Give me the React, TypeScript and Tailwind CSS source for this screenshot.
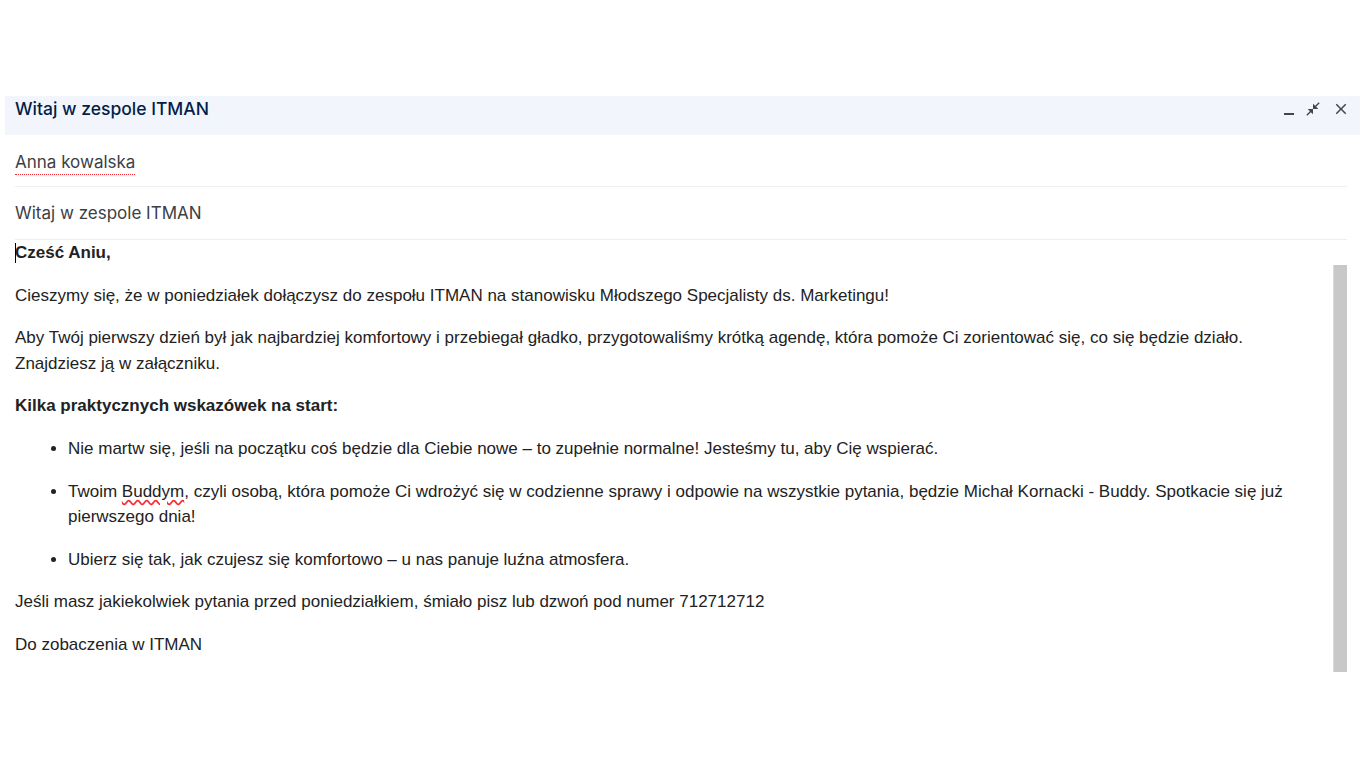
import React from 'react';

const inter = { fontFamily: 'Inter, Roboto, sans-serif' };
const arial = { fontFamily: '"Liberation Sans", Arial, sans-serif' };

const MinimizeIcon = () => (
  <svg width="12" height="14" viewBox="0 0 12 14" fill="#444746">
    <rect x="1" y="11" width="10" height="2" />
  </svg>
);

const CloseFullIcon = () => (
  <svg width="16" height="16" viewBox="0 0 24 24" fill="#444746">
    <path d="M22 3.41 16.71 8.7 20 12h-8V4l3.29 3.29L20.59 2 22 3.41zM3.41 22l5.29-5.29L12 20v-8H4l3.29 3.29L2 20.59 3.41 22z" />
  </svg>
);

const CloseIcon = () => (
  <svg width="18" height="18" viewBox="0 0 24 24" fill="#444746">
    <path d="M19 6.41 17.59 5 12 10.59 6.41 5 5 6.41 10.59 12 5 17.59 6.41 19 12 13.41 17.59 19 19 17.59 13.41 12z" />
  </svg>
);

const bullets = [
  <>Nie martw się, jeśli na początku coś będzie dla Ciebie nowe – to zupełnie normalne! Jesteśmy tu, aby Cię wspierać.</>,
  <>
    Twoim{' '}
    <span className="underline decoration-red-500 decoration-wavy underline-offset-[3px]">Buddym</span>, czyli osobą, która
    pomoże Ci wdrożyć się w codzienne sprawy i odpowie na wszystkie pytania, będzie Michał Kornacki - Buddy. Spotkacie się już
    pierwszego dnia!
  </>,
  <>Ubierz się tak, jak czujesz się komfortowo – u nas panuje luźna atmosfera.</>,
];

export default function App() {
  return (
    <div className="min-h-[768px] w-[1366px] bg-white pt-[96px]">
      {/* Nagłówek okna */}
      <div className="ml-[5px] flex h-[39px] w-[1355px] items-start justify-between bg-[#f2f6fc] pl-[10px] pr-[10px]">
        <span className="text-[17.5px] font-medium leading-[26px] text-[#041e49]" style={inter}>
          Witaj w zespole ITMAN
        </span>
        <div className="flex items-center pt-[4px]">
          <MinimizeIcon />
          <span className="ml-[10px]">
            <CloseFullIcon />
          </span>
          <span className="ml-[11px]">
            <CloseIcon />
          </span>
        </div>
      </div>

      <div className="ml-[15px] w-[1332px]">
        {/* Odbiorca */}
        <div className="flex h-[52px] items-center border-b border-[#eceff1] pt-[4px]" style={inter}>
          <span className="border-b border-dotted border-red-500 pb-[1px] text-[17px] leading-[22px] text-[#3c4043]">
            Anna kowalska
          </span>
        </div>
        {/* Temat */}
        <div className="flex h-[53px] items-center border-b border-[#eceff1] pt-[1px]" style={inter}>
          <span className="text-[17px] text-[#3c4043]">Witaj w zespole ITMAN</span>
        </div>
      </div>

      {/* Treść */}
      <div className="ml-[15px] flex w-[1332px] justify-between">
        <div className="w-[1300px] text-[17px] leading-[25.6px] text-[#222]" style={arial}>
          <p className="relative font-bold">
            <span className="absolute left-0 top-[3px] h-[20px] w-px bg-black" />
            Cześć Aniu,
          </p>
          <p className="mt-[17px]">
            Cieszymy się, że w poniedziałek dołączysz do zespołu ITMAN na stanowisku Młodszego Specjalisty ds. Marketingu!
          </p>
          <p className="mt-[17px]">
            Aby Twój pierwszy dzień był jak najbardziej komfortowy i przebiegał gładko, przygotowaliśmy krótką agendę, która pomoże Ci
            zorientować się, co się będzie działo. Znajdziesz ją w załączniku.
          </p>
          <p className="mt-[17px] font-bold">Kilka praktycznych wskazówek na start:</p>
          <ul className="mt-[17px] list-disc pl-[53px]">
            {bullets.map((b, i) => (
              <li key={i} className={i > 0 ? 'mt-[17px]' : ''}>
                {b}
              </li>
            ))}
          </ul>
          <p className="mt-[17px]">Jeśli masz jakiekolwiek pytania przed poniedziałkiem, śmiało pisz lub dzwoń pod numer 712712712</p>
          <p className="mt-[17px]">Do zobaczenia w ITMAN</p>
        </div>
        {/* Pasek przewijania */}
        <div className="mt-[25px] h-[407px] w-[14px] border-l border-[#dadada] bg-[#c8c8c8]" />
      </div>
    </div>
  );
}
